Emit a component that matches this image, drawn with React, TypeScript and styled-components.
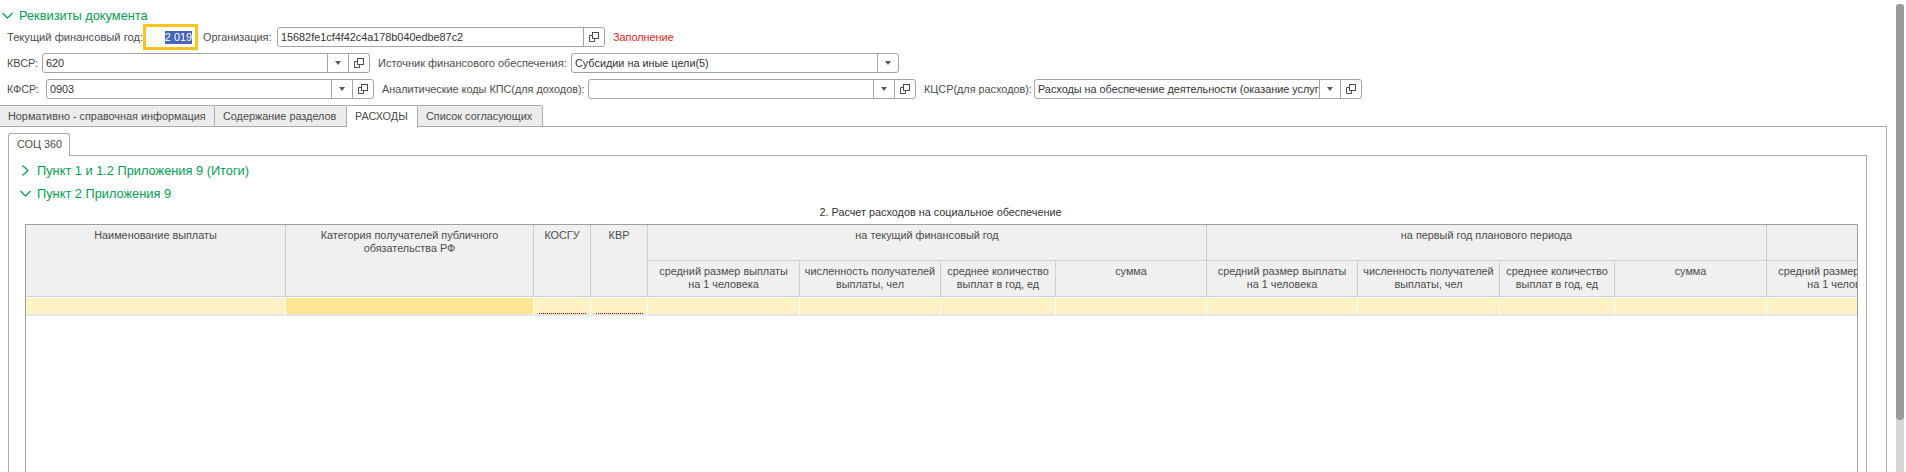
import React from "react";
import styled, { createGlobalStyle } from "styled-components";

const Global = createGlobalStyle`
  html, body { margin: 0; padding: 0; background: #fff; overflow: hidden; }
  body { font-family: "Liberation Sans", Arial, sans-serif; font-size: 10.85px; color: #4b4b4b; }
`;

const Page = styled.div`
  display: flex;
  width: 1906px;
  height: 472px;
  overflow: hidden;
`;
const Content = styled.div`
  width: 1896px;
  flex: none;
  display: flex;
  flex-direction: column;
`;
const ScrollTrack = styled.div`
  width: 8px;
  margin-top: 4px;
  flex: none;
  height: 468px;
  background: #d6d6d6;
`;
const ScrollThumb = styled.div`
  height: 416px;
  background: #9b9b9b;
  border-radius: 4px;
`;
const SectionHead = styled.div<{ $ml: number; $h: number; $pt?: number }>`
  display: flex;
  align-items: center;
  gap: 6px;
  box-sizing: border-box;
  height: ${(p) => p.$h}px;
  padding-top: ${(p) => p.$pt ?? 0}px;
  margin-left: ${(p) => p.$ml}px;
  color: #00a04f;
  font-size: 12.8px;
  flex: none;
`;
const Row = styled.div<{ $h: number; $top: number }>`
  display: flex;
  align-items: center;
  height: ${(p) => p.$h}px;
  margin-top: ${(p) => p.$top}px;
  padding-left: 7px;
  flex: none;
`;
const Label = styled.span<{ $w: number; $pl?: number; $fs?: number }>`
  width: ${(p) => p.$w}px;
  box-sizing: border-box;
  padding-left: ${(p) => p.$pl ?? 0}px;
  font-size: ${(p) => p.$fs ?? 10.85}px;
  flex: none;
  white-space: nowrap;
  color: #4d4d4d;
`;
const YearBox = styled.div`
  width: 55px;
  height: 26px;
  box-sizing: border-box;
  border: 3px solid #f7c51e;
  flex: none;
  display: flex;
  justify-content: flex-end;
  align-items: center;
  padding-right: 3px;
  margin-right: 5px;
`;
const Selected = styled.span`
  background: #4764bd;
  color: #fff;
  line-height: 13px;
`;
const Field = styled.div<{ $w: number }>`
  width: ${(p) => p.$w}px;
  height: 20px;
  box-sizing: border-box;
  flex: none;
  display: flex;
  border: 1px solid #a3a3a3;
  border-radius: 3px;
  background: #fff;
`;
const FieldText = styled.div`
  flex: 1;
  min-width: 0;
  overflow: hidden;
  white-space: nowrap;
  line-height: 18px;
  padding-left: 3px;
  color: #333;
`;
const FieldBtn = styled.div`
  width: 21px;
  flex: none;
  box-sizing: border-box;
  border-left: 1px solid #a3a3a3;
  display: flex;
  align-items: center;
  justify-content: center;
`;
const Status = styled.span`
  color: #f01818;
  margin-left: 8px;
`;
const Tabs = styled.div`
  display: flex;
  height: 22px;
  margin-top: 6px;
  flex: none;
  position: relative;
  z-index: 1;
`;
const Tab = styled.div<{ $w: number; $active?: boolean }>`
  width: ${(p) => p.$w}px;
  box-sizing: border-box;
  flex: none;
  height: ${(p) => (p.$active ? 23 : 22)}px;
  background: ${(p) => (p.$active ? "#fff" : "#ececec")};
  border: 1px solid #ababab;
  border-left: none;
  border-bottom: ${(p) => (p.$active ? "none" : "1px solid #ababab")};
  border-radius: 0 2px 0 0;
  padding-left: 8px;
  line-height: 21px;
  color: #4b4b4b;
  white-space: nowrap;
`;
const OuterPanel = styled.div`
  width: 1887px;
  box-sizing: border-box;
  margin-top: -1px;
  border-top: 1px solid #ababab;
  border-right: 1px solid #ababab;
  padding: 6px 19px 0 8px;
  flex: 1;
  display: flex;
  flex-direction: column;
  min-height: 0;
`;
const InnerTab = styled.div`
  width: 62px;
  height: 23px;
  box-sizing: border-box;
  background: #fff;
  border: 1px solid #ababab;
  border-bottom: none;
  border-radius: 3px 3px 0 0;
  padding-left: 8px;
  line-height: 21px;
  position: relative;
  z-index: 1;
`;
const InnerPanel = styled.div`
  flex: 1;
  min-height: 0;
  box-sizing: border-box;
  margin-top: -1px;
  border: 1px solid #ababab;
  border-bottom: none;
  padding: 3px 8px 0 16px;
  display: flex;
  flex-direction: column;
`;
const Caption = styled.div`
  text-align: center;
  height: 14px;
  line-height: 14px;
  padding-right: 2px;
  color: #333;
  flex: none;
`;
const TableBox = styled.div`
  flex: 1;
  min-height: 0;
  overflow: hidden;
  border: 1px solid #a0a0a0;
  border-bottom: none;
  margin-top: 5px;
`;
const Grid = styled.div`
  display: grid;
  width: max-content;
  grid-template-columns: 260px 248px 57px 57px 152px 141px 115px 151px 151px 142px 115px 152px 152px 142px 115px 152px;
  grid-template-rows: 36px 36px 19px;
`;
const HeadCell = styled.div<{ $col: string; $row: string }>`
  grid-column: ${(p) => p.$col};
  grid-row: ${(p) => p.$row};
  box-sizing: border-box;
  background: #f0f0f0;
  border-right: 1px solid #cfcfcf;
  border-bottom: 1px solid #cfcfcf;
  text-align: center;
  line-height: 13px;
  padding-top: 4px;
  color: #4b4b4b;
  white-space: nowrap;
`;
const BodyCell = styled.div<{ $strong?: boolean }>`
  box-sizing: border-box;
  background: ${(p) => (p.$strong ? "#fee592" : "#fef1c6")};
  border-top: 1px solid #fff;
  border-right: 1px solid #fff;
  border-bottom: 2px solid #e6e6e6;
  display: flex;
  align-items: flex-end;
  justify-content: center;
`;
const ErrorMark = styled.span`
  width: 47px;
  border-bottom: 1px dotted #c40000;
`;

const Chevron = ({ open }: { open?: boolean }) => (
  <svg width="11" height="11" viewBox="0 0 11 11" fill="none" stroke="#0f9d58" strokeWidth="1.3">
    {open ? <path d="M0.5 3 L5.5 8 L10.5 3" /> : <path d="M2.5 0.5 L8 5.5 L2.5 10.5" />}
  </svg>
);
const Arrow = () => (
  <svg width="6" height="4" viewBox="0 0 6 4">
    <path d="M0 0 H6 L3 4 Z" fill="#5a5a5a" />
  </svg>
);
const OpenIcon = () => (
  <svg width="10" height="10" viewBox="0 0 10 10" fill="none" stroke="#4b4b4b" strokeWidth="1">
    <rect x="3.5" y="0.5" width="6" height="6" />
    <path d="M3.5 3.5 H0.5 V9.5 H5.5 V6.5" />
  </svg>
);

const groups = ["на текущий финансовый год", "на первый год планового периода", "на второй год планового периода"];
const sub = [
  ["средний размер выплаты", "на 1 человека"],
  ["численность получателей", "выплаты, чел"],
  ["среднее количество", "выплат в год, ед"],
  ["сумма"],
];

const TextField = ({ w, text, arrow, open = true }: { w: number; text: string; arrow?: boolean; open?: boolean }) => (
  <Field $w={w}>
    <FieldText>{text}</FieldText>
    {arrow && <FieldBtn><Arrow /></FieldBtn>}
    {open && <FieldBtn><OpenIcon /></FieldBtn>}
  </Field>
);

export default function App() {
  return (
    <Page>
      <Global />
      <Content>
        <SectionHead $ml={2} $h={24} $pt={6}><Chevron open />Реквизиты документа</SectionHead>
        <Row $h={26} $top={0}>
          <Label $w={136} $fs={11.15}>Текущий финансовый год:</Label>
          <YearBox><Selected>2 019</Selected></YearBox>
          <Label $w={74}>Организация:</Label>
          <TextField w={328} text="15682fe1cf4f42c4a178b040edbe87c2" />
          <Status>Заполнение</Status>
        </Row>
        <Row $h={20} $top={3}>
          <Label $w={35}>КВСР:</Label>
          <TextField w={328} text="620" arrow />
          <Label $w={201} $pl={8} $fs={11}>Источник финансового обеспечения:</Label>
          <TextField w={328} text="Субсидии на иные цели(5)" arrow open={false} />
        </Row>
        <Row $h={20} $top={6}>
          <Label $w={39}>КФСР:</Label>
          <TextField w={328} text="0903" arrow />
          <Label $w={214} $pl={8}>Аналитические коды КПС(для доходов):</Label>
          <TextField w={328} text="" arrow />
          <Label $w={118} $pl={8}>КЦСР(для расходов):</Label>
          <TextField w={328} text="Расходы на обеспечение деятельности (оказание услуг)" arrow />
        </Row>
        <Tabs>
          <Tab $w={215}>Нормативно - справочная информация</Tab>
          <Tab $w={132}>Содержание разделов</Tab>
          <Tab $w={71} $active>РАСХОДЫ</Tab>
          <Tab $w={125}>Список согласующих</Tab>
        </Tabs>
        <OuterPanel>
          <InnerTab>СОЦ 360</InnerTab>
          <InnerPanel>
            <SectionHead $ml={-5} $h={22}><Chevron />Пункт 1 и 1.2 Приложения 9 (Итоги)</SectionHead>
            <SectionHead $ml={-5} $h={24}><Chevron open />Пункт 2 Приложения 9</SectionHead>
            <Caption>2. Расчет расходов на социальное обеспечение</Caption>
            <TableBox>
              <Grid>
                <HeadCell $col="1" $row="1 / 3">Наименование выплаты</HeadCell>
                <HeadCell $col="2" $row="1 / 3">Категория получателей публичного<br />обязательства РФ</HeadCell>
                <HeadCell $col="3" $row="1 / 3">КОСГУ</HeadCell>
                <HeadCell $col="4" $row="1 / 3">КВР</HeadCell>
                {groups.map((g, i) => (
                  <HeadCell key={g} $col={`${5 + i * 4} / span 4`} $row="1">{g}</HeadCell>
                ))}
                {groups.flatMap((g, i) =>
                  sub.map((s, j) => (
                    <HeadCell key={g + j} $col={`${5 + i * 4 + j}`} $row="2">
                      {s.map((l) => <div key={l}>{l}</div>)}
                    </HeadCell>
                  ))
                )}
                {Array.from({ length: 16 }, (_, i) => (
                  <BodyCell key={i} $strong={i === 1}>
                    {(i === 2 || i === 3) && <ErrorMark />}
                  </BodyCell>
                ))}
              </Grid>
            </TableBox>
          </InnerPanel>
        </OuterPanel>
      </Content>
      <ScrollTrack><ScrollThumb /></ScrollTrack>
    </Page>
  );
}
